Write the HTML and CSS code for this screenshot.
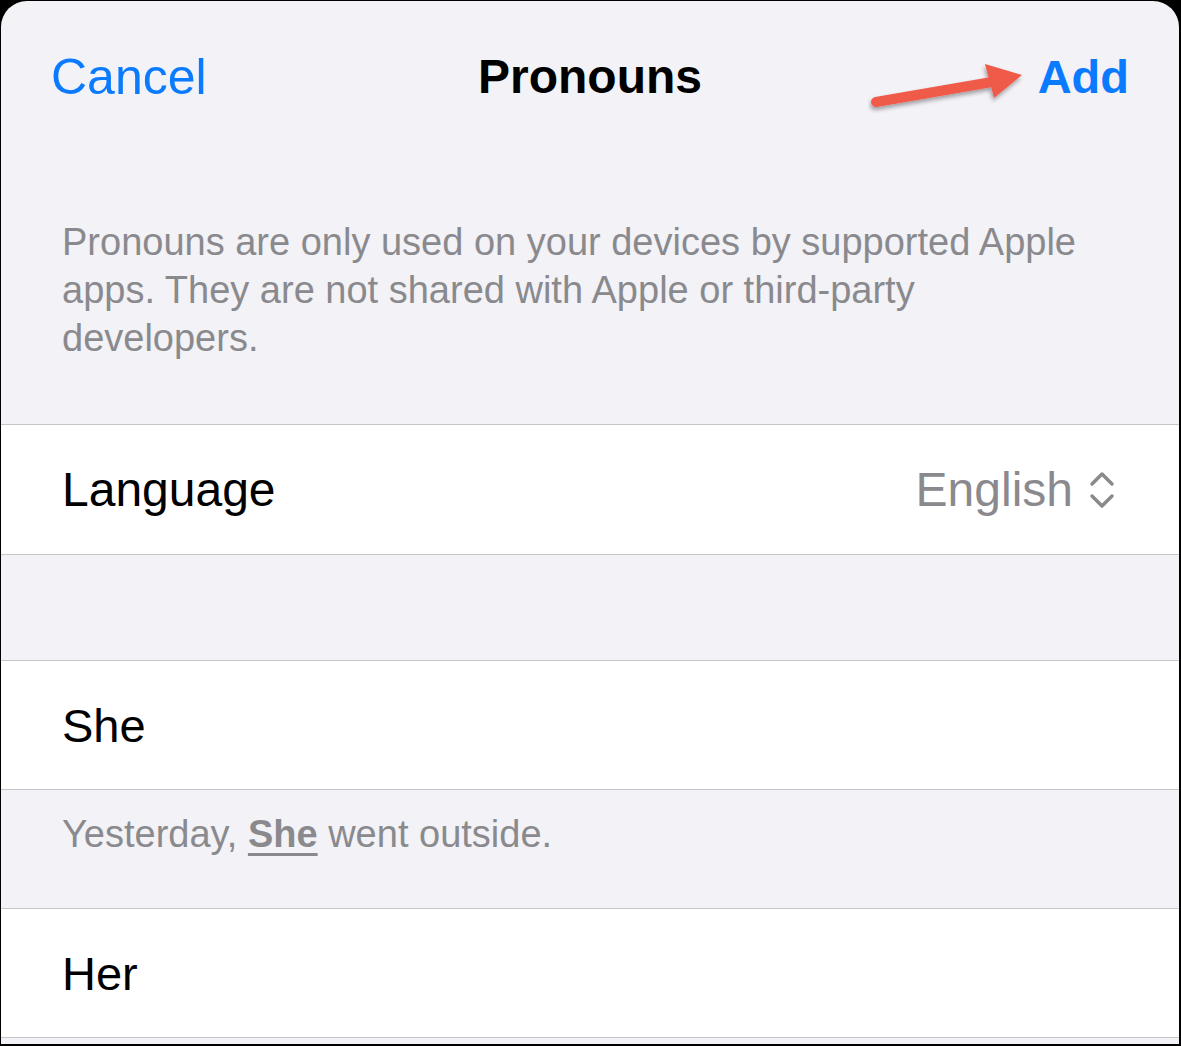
FILE: index.html
```html
<!DOCTYPE html>
<html lang="en">

<head>
    <meta charset="UTF-8">
    <meta name="viewport" content="width=device-width, initial-scale=1.0">
    <title>Pronouns</title>
    <link rel="stylesheet" href="styles.css">
</head>

<body>
    <div class="sheet">
        <div class="navBar">
            <span class="navButton">Cancel</span>
            <span class="navTitle">Pronouns</span>
            <span class="navButton addButton">Add</span>
            <svg class="arrowMark" width="180" height="60" viewBox="0 0 180 60">
                <defs>
                    <filter id="arrowShadow" x="-20%" y="-40%" width="140%" height="180%">
                        <feDropShadow dx="-1" dy="3" stdDeviation="2" flood-color="#000" flood-opacity="0.35" />
                    </filter>
                </defs>
                <g filter="url(#arrowShadow)">
                    <line x1="8" y1="48" x2="124" y2="28" stroke="#f05a4a" stroke-width="10" stroke-linecap="round" />
                    <polygon points="117,10 154,21 126,44" fill="#f05a4a" />
                </g>
            </svg>
        </div>

        <p class="groupNote">Pronouns are only used on your devices by supported Apple apps. They are not shared with Apple or third-party developers.</p>

        <div class="group">
            <div class="row tall">
                <span class="rowLabel wide">Language</span>
                <span class="rowValue">English
                    <svg class="updown" width="26" height="40" viewBox="0 0 26 40">
                        <polyline points="3,14 13,4 23,14" fill="none" stroke="#8a8a8e" stroke-width="3.5" stroke-linecap="round" stroke-linejoin="round" />
                        <polyline points="3,26 13,36 23,26" fill="none" stroke="#8a8a8e" stroke-width="3.5" stroke-linecap="round" stroke-linejoin="round" />
                    </svg>
                </span>
            </div>
        </div>

        <div class="spacer"></div>

        <div class="group">
            <div class="row">
                <span class="rowLabel">She</span>
            </div>
        </div>
        <p class="example">Yesterday, <u class="pronoun">She</u> went outside.</p>

        <div class="group">
            <div class="row">
                <span class="rowLabel">Her</span>
            </div>
        </div>
    </div>
</body>

</html>
```

FILE: styles.css
```css
* {
    margin: 0;
    padding: 0;
    box-sizing: border-box;
}

html,
body {
    height: 100%;
}

body {
    background-color: black;
    font-family: "Liberation Sans", Arial, sans-serif;
    overflow: hidden;
}

.sheet {
    margin: 1px 2px 0 1px;
    height: 1043px;
    background-color: #f2f2f7;
    border-radius: 26px 26px 0 0;
    overflow: hidden;
    position: relative;
}

.navBar {
    position: relative;
    display: flex;
    justify-content: space-between;
    align-items: center;
    padding: 48px 50px 0 50px;
    height: 104px;
}

.navButton {
    color: #0a7aff;
    font-size: 50px;
    line-height: 56px;
}

.addButton {
    font-weight: bold;
    font-size: 47px;
}

.navTitle {
    position: absolute;
    left: 0;
    right: 0;
    top: 48px;
    text-align: center;
    font-weight: bold;
    font-size: 48px;
    line-height: 56px;
    color: black;
    pointer-events: none;
}

.arrowMark {
    position: absolute;
    left: 867px;
    top: 53px;
}

.groupNote {
    padding: 113px 90px 62px 61px;
    color: #8a8a8e;
    font-size: 38px;
    line-height: 48px;
}

.group {
    background-color: white;
    border-top: 1px solid #c6c6c8;
    border-bottom: 1px solid #c6c6c8;
}

.row {
    display: flex;
    justify-content: space-between;
    align-items: center;
    height: 128px;
    padding: 0 64px 0 61px;
}

.row.tall {
    height: 129px;
}

.rowLabel {
    font-size: 47px;
    color: black;
}

.rowLabel.wide {
    font-size: 48px;
}

.rowValue {
    display: flex;
    align-items: center;
    gap: 16px;
    font-size: 48px;
    color: #8a8a8e;
}

.spacer {
    height: 105px;
}

.example {
    padding: 20px 61px 50px;
    color: #8a8a8e;
    font-size: 38px;
    line-height: 48px;
}

.pronoun {
    font-weight: bold;
    text-decoration-thickness: 3px;
    text-underline-offset: 6px;
}
```
